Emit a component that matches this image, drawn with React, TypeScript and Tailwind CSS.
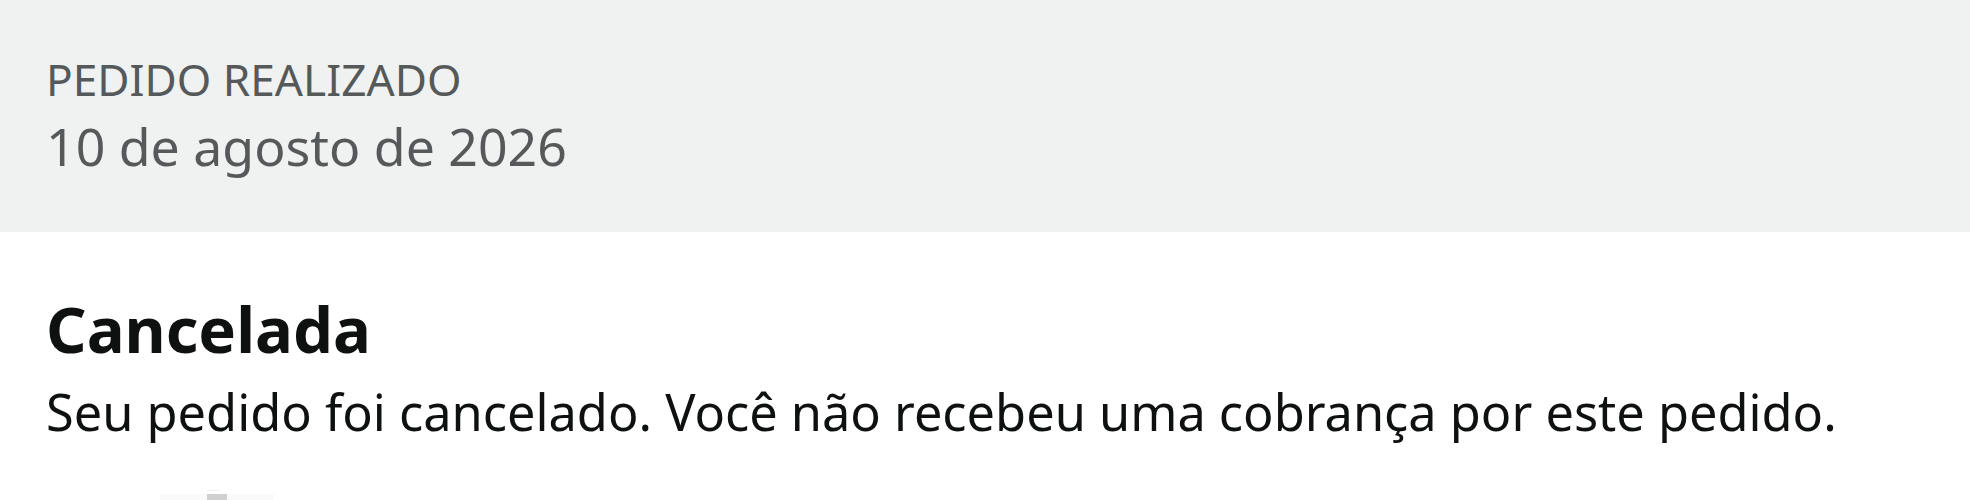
import React from "react";

export default function App() {
  return (
    <div className="w-[1970px] h-[500px] overflow-hidden bg-white font-['Noto_Sans',sans-serif]">
      <div className="bg-[#F0F2F2] h-[232px] pl-[46px] pt-[53px]">
        <div className="text-[44.2px] leading-[52px] text-[#565959] uppercase">Pedido realizado</div>
        <div className="mt-[9px] text-[51.8px] leading-[64px] text-[#565959]">10 de agosto de 2026</div>
      </div>
      <div className="pl-[46px] pt-[59px]">
        <div className="text-[63.3px] leading-[76px] font-bold text-[#0F1111]">Cancelada</div>
        <div className="mt-[13px] text-[50.5px] leading-[64px] text-[#0F1111]">
          Seu pedido foi cancelado. Você não recebeu uma cobrança por este pedido.
        </div>
        <div className="ml-[114px] mt-[41px]">
          <svg width="114" height="20" viewBox="0 0 114 20">
            <rect x="47" y="5" width="12" height="1" fill="#f0f0f0" />
            <rect x="0" y="9" width="114" height="11" fill="#fafafa" />
            <rect x="47" y="9" width="20" height="11" fill="#d0d0d0" />
          </svg>
        </div>
      </div>
    </div>
  );
}
